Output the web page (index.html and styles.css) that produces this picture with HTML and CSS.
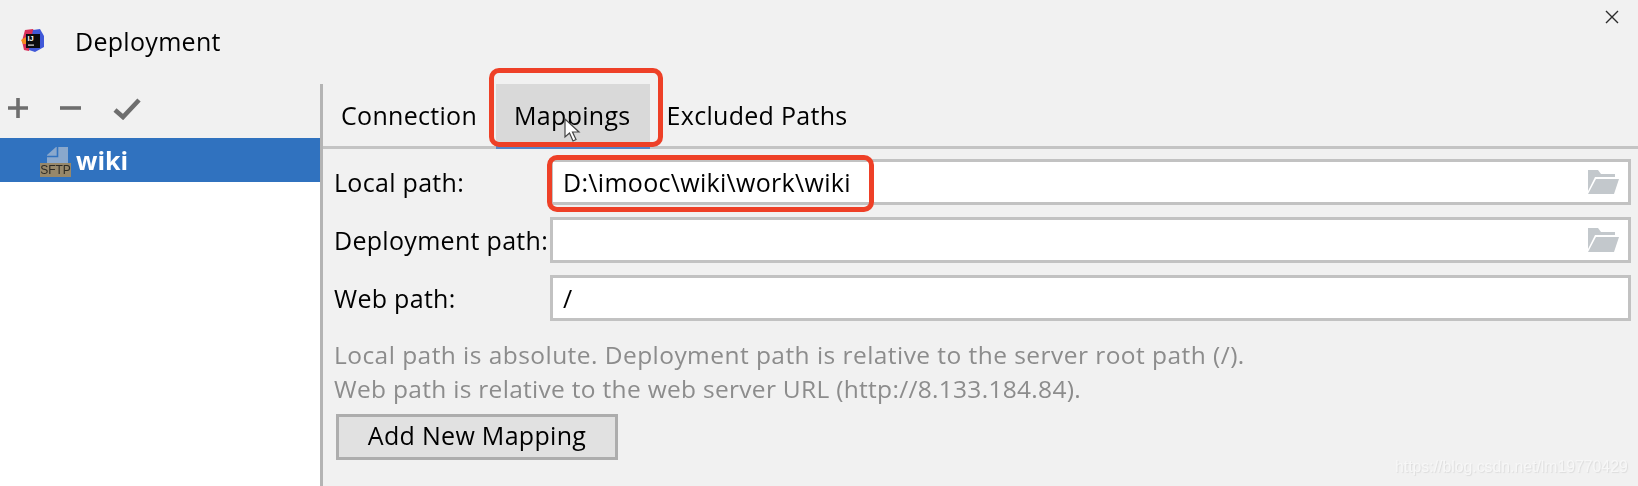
FILE: index.html
```html
<!DOCTYPE html>
<html lang="en">
<head>
    <meta charset="UTF-8">
    <meta name="viewport" content="width=device-width, initial-scale=1.0">
    <title>Deployment</title>
    <link rel="stylesheet" href="styles.css">
</head>
<body>
    <div class="dialog">
        <!-- Title bar -->
        <header class="titlebar">
            <svg class="app-icon" width="24" height="24" viewBox="0 0 24 24">
                <path d="M4 1 L12 0 L14 4 L8 22 L3 21 L1 12 Z" fill="#d8305a"/>
                <path d="M12 1 L19 0 L23 7 L23 18 L14 23 L8 21 Z" fill="#4058d8"/>
                <path d="M0 11 L5 8 L5 15 L2 15 Z" fill="#f58a1f"/>
                <rect x="5" y="5" width="14" height="14" fill="#0b0b0f"/>
                <text class="app-icon-text" x="6.5" y="12">IJ</text>
                <rect x="7" y="15.5" width="6" height="1.2" fill="#ddd"/>
            </svg>
            <h1 class="title">Deployment</h1>
            <svg class="close" width="14" height="14" viewBox="0 0 14 14">
                <path d="M1 1 L13 13 M13 1 L1 13" stroke="#2b2b2b" stroke-width="1.4" fill="none"/>
            </svg>
        </header>

        <div class="content">
            <!-- Server list -->
            <aside class="sidebar">
                <div class="toolbar">
                    <svg width="20" height="20" viewBox="0 0 20 20"><path d="M10 0 V20 M0 10 H20" stroke="#6e6e6e" stroke-width="3.6"/></svg>
                    <svg width="21" height="20" viewBox="0 0 21 20"><path d="M0 10 H21" stroke="#6e6e6e" stroke-width="3.6"/></svg>
                    <svg width="28" height="22" viewBox="0 0 28 22"><path d="M2 12 L10 19 L26 2" stroke="#6e6e6e" stroke-width="4.6" fill="none"/></svg>
                </div>
                <div class="server selected">
                    <div class="sftp-icon">
                        <svg class="sftp-sheet" width="21" height="16" viewBox="0 0 21 16">
                            <path d="M9 0 H21 V16 H0 V8 Z" fill="#8aa8cc"/>
                            <path d="M10.5 0 V9.5 H0" stroke="#3072bf" stroke-width="1.6" fill="none"/>
                        </svg>
                        <span class="sftp-badge">SFTP</span>
                    </div>
                    <span class="server-name">wiki</span>
                </div>
            </aside>

            <!-- Settings -->
            <main class="panel">
                <nav class="tabs">
                    <span class="tab">Connection</span>
                    <span class="tab active">Mappings</span>
                    <span class="tab">Excluded Paths</span>
                </nav>

                <form class="fields">
                    <label class="field-label">Local path:</label>
                    <div class="input">
                        <span>D:\imooc\wiki\work\wiki</span>
                        <svg class="folder" width="31" height="24" viewBox="0 0 31 24">
                            <path d="M0 0 H10 L13 4 H27 V7 H7 L0 21 Z" fill="#c3c8cc"/>
                            <path d="M8 9 H31 L26 24 H0 Z" fill="#c3c8cc"/>
                        </svg>
                    </div>
                    <label class="field-label">Deployment path:</label>
                    <div class="input">
                        <span></span>
                        <svg class="folder" width="31" height="24" viewBox="0 0 31 24">
                            <path d="M0 0 H10 L13 4 H27 V7 H7 L0 21 Z" fill="#c3c8cc"/>
                            <path d="M8 9 H31 L26 24 H0 Z" fill="#c3c8cc"/>
                        </svg>
                    </div>
                    <label class="field-label">Web path:</label>
                    <div class="input">
                        <span>/</span>
                    </div>
                </form>

                <div class="hint">
                    <div>Local path is absolute. Deployment path is relative to the server root path (/).</div>
                    <div class="hint-tight">Web path is relative to the web server URL (http://8.133.184.84).</div>
                </div>
                <button class="add-button" type="button">Add New Mapping</button>
            </main>
        </div>

        <!-- Things drawn over the screenshot -->
        <div class="mark mark-tab"></div>
        <div class="mark mark-input"></div>
        <svg class="cursor" width="17" height="24" viewBox="0 0 17 24">
            <path d="M1 1 V19 L5.5 15 L9 23 L12 21.5 L8.5 14 H15 Z" fill="#fff" stroke="#444" stroke-width="1.2"/>
        </svg>
        <span class="watermark">https://blog.csdn.net/lm19770429</span>
    </div>
</body>
</html>
```

FILE: styles.css
```css
html, body {
    margin: 0;
    padding: 0;
}
body {
    font-family: "Open Sans", "Liberation Sans", sans-serif;
    font-size: 25px;
    letter-spacing: 0.3px;
    color: #000;
    background-color: #f1f1f1;
}
.dialog {
    position: relative;
    width: 1638px;
    height: 486px;
    overflow: hidden;
    filter: blur(0.4px);
}

/* title bar */
.titlebar {
    display: flex;
    height: 84px;
    box-sizing: border-box;
    padding-left: 21px;
    align-items: center;
}
.app-icon {
    flex: none;
    margin-bottom: 2px;
}
.app-icon-text {
    font-family: "Liberation Sans", sans-serif;
    font-size: 7.5px;
    font-weight: 700;
    letter-spacing: 0;
    fill: #fff;
}
.title {
    margin: 0 0 2px 30px;
    font-size: 25px;
    font-weight: 400;
}
.close {
    margin: 10px 19px 0 auto;
    align-self: flex-start;
}

.content {
    display: flex;
    height: 402px;
}

/* left side */
.sidebar {
    width: 320px;
    flex: none;
    border-right: 3px solid #b4b4b4;
    background: linear-gradient(#f1f1f1 54px, #fff 54px);
}
.toolbar {
    display: flex;
    height: 54px;
    box-sizing: border-box;
    padding: 14px 0 0 8px;
    gap: 32px;
    align-items: flex-start;
}
.server {
    display: flex;
    height: 44px;
    align-items: center;
    padding-left: 40px;
}
.selected {
    background-color: #3072bf;
    color: #fff;
}
.sftp-icon {
    display: flex;
    flex-direction: column;
    align-items: center;
    width: 31px;
    padding-top: 4px;
}
.sftp-sheet {
    display: block;
    margin-left: 3px;
}
.sftp-badge {
    display: block;
    width: 31px;
    height: 14px;
    background-color: #97886a;
    color: #2c2a24;
    font-family: "Liberation Sans", sans-serif;
    font-size: 12px;
    letter-spacing: 0;
    line-height: 14px;
    text-align: center;
}
.server-name {
    margin-left: 5px;
    font-size: 25px;
    font-weight: 700;
    letter-spacing: 0;
}

/* right side */
.panel {
    flex: 1;
    min-width: 0;
}
.tabs {
    display: flex;
    height: 65px;
    box-sizing: border-box;
    border-bottom: 3px solid #c4c4c4;
}
.tab {
    padding: 13px 19px 0 18px;
    line-height: 36px;
}
.tab.active {
    height: 65px;
    box-sizing: border-box;
    background-color: #d9d9d9;
    border-bottom: 3px solid #5585ca;
}
.tab.active + .tab {
    padding-left: 17px;
}
.fields {
    display: grid;
    grid-template-columns: 216px 1fr;
    grid-auto-rows: 46px;
    row-gap: 12px;
    margin: 10px 7px 0 11px;
    align-items: center;
}
.field-label {
    white-space: nowrap;
}
.input {
    display: flex;
    height: 46px;
    box-sizing: border-box;
    align-items: center;
    justify-content: space-between;
    padding: 0 9px 0 10px;
    border: 3px solid #c2c2c2;
    background-color: #fff;
}
.folder {
    flex: none;
}
.hint {
    margin: 17px 0 0 11px;
    font-size: 24.5px;
    letter-spacing: 0.45px;
    line-height: 34px;
    color: #8c8c8c;
}
.hint-tight {
    letter-spacing: 0.3px;
}
.add-button {
    display: block;
    width: 282px;
    height: 46px;
    margin: 8px 0 0 13px;
    padding: 0 0 5px;
    border: 3px solid #adadad;
    background-color: #e1e1e1;
    color: #000;
    font: inherit;
    letter-spacing: inherit;
}

/* overlays */
.mark {
    position: absolute;
    box-sizing: border-box;
    border: 5px solid #ee4027;
    border-radius: 10px;
}
.mark-tab {
    left: 489px;
    top: 68px;
    width: 174px;
    height: 79px;
}
.mark-input {
    left: 547px;
    top: 155px;
    width: 327px;
    height: 57px;
}
.cursor {
    position: absolute;
    left: 564px;
    top: 118px;
}
.watermark {
    position: absolute;
    left: 1395px;
    top: 458px;
    font-family: "Liberation Sans", sans-serif;
    font-size: 15.8px;
    letter-spacing: 0;
    color: #f7f7f7;
    text-shadow: 1px 1px 1px #dcdcdc;
}
```
